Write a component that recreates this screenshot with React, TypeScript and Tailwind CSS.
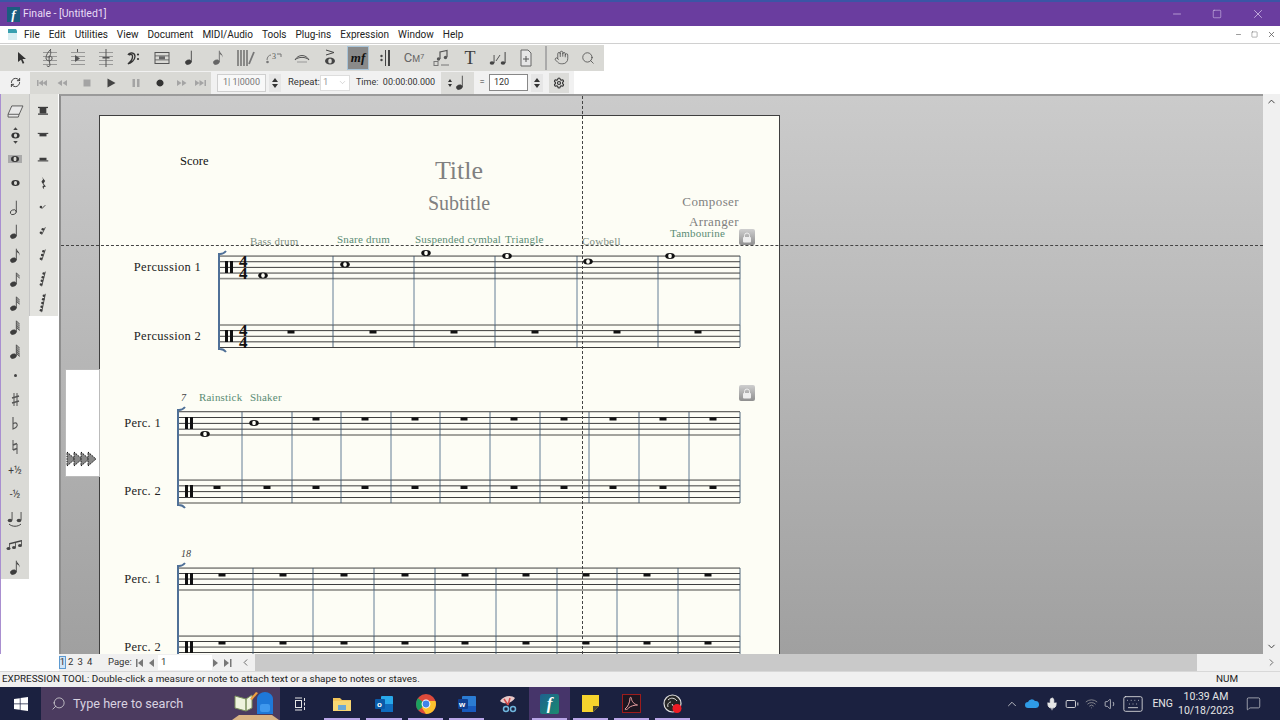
import { ChevronLeft, ChevronRight, ChevronUp, ChevronDown, Hand, Search, Settings, RefreshCw, Minus, Square, X, Mic, Volume1, Wifi, Keyboard, MessageSquare, Battery } from "lucide-react";
import type { ReactNode } from "react";

const ui = "font-['Roboto','Noto_Sans',sans-serif]";
const ink = "#3d3d3d";

// ---- small music glyphs used by the palettes
function Note({ flags = 0, open = false, fill = ink }: { flags?: number; open?: boolean; fill?: string }) {
  return (
    <svg width="12" height="17" viewBox="0 0 14 20">
      <ellipse cx="5" cy="15.5" rx="3.6" ry="2.7" transform="rotate(-22 5 15.5)" fill={open ? "none" : fill} stroke={fill} strokeWidth={open ? 1 : 0.5} />
      <rect x="8" y="2" width="1" height="13.5" fill={fill} />
      {flags === 1 && <path d="M9 2c.5 3 4 4 3.4 8-.5-2.5-2-3.500-3.400-4z" fill={fill} />}
      {flags > 1 &&
        Array.from({ length: flags }).map((_, i) => <path key={i} d={`M9 ${2 + i * 2.4}l3.500 3.500v1.300l-3.500-3.500z`} fill={fill} />)}
    </svg>
  );
}

function Rest({ kind }: { kind: number }) {
  if (kind === 0)
    return (
      <svg width="14" height="10" viewBox="0 0 16 12">
        <rect x="2" y="1" width="12" height="1.500" fill={ink} />
        <rect x="4" y="2" width="8" height="7" fill={ink} />
        <rect x="2" y="9" width="12" height="1.500" fill={ink} />
      </svg>
    );
  if (kind === 1)
    return (
      <svg width="14" height="9" viewBox="0 0 16 10">
        <rect x="2" y="2" width="12" height="1.200" fill={ink} />
        <rect x="4" y="3" width="8" height="3" fill={ink} />
      </svg>
    );
  if (kind === 2)
    return (
      <svg width="14" height="9" viewBox="0 0 16 10">
        <rect x="4" y="3" width="8" height="3" fill={ink} />
        <rect x="2" y="6" width="12" height="1.200" fill={ink} />
      </svg>
    );
  if (kind === 3)
    return (
      <svg width="9" height="15" viewBox="0 0 10 18">
        <path d="M3 1l4 5-2 3 3 4c-2-.5-3.500 0-2 3-2.500-1.500-3-4-.500-4.500L2.500 7 4.500 4z" fill={ink} />
      </svg>
    );
  const dots = kind - 3;
  return (
    <svg width="11" height="22" viewBox="0 0 12 22">
      <path d={`M4 ${11 + dots * 2}L8 ${11 - dots * 2}`} stroke={ink} strokeWidth="1" />
      {Array.from({ length: dots }).map((_, i) => (
        <circle key={i} cx={3.2 + (i * 4) / Math.max(dots, 1)} cy={11 + dots * 2 - 2 - i * 4} r="1.400" fill={ink} />
      ))}
    </svg>
  );
}

function Txt({ children, className }: { children: ReactNode; className: string }) {
  return <span className={`leading-none text-[#3d3d3d] ${className}`}>{children}</span>;
}

function StaffIcon({ mark }: { mark?: ReactNode }) {
  return (
    <svg width="20" height="20" viewBox="0 0 20 20">
      {[4, 8, 12, 16].map((y) => (
        <rect key={y} x="3" y={y} width="14" height="0.800" fill="#888" />
      ))}
      {mark}
    </svg>
  );
}

const topTools: ReactNode[] = [
  <svg key="a" width="12" height="14" viewBox="0 0 12 14"><path d="M2 1l8 7H6.500l1.800 4-1.600.8L5 8.800 2 11z" fill="#333" /></svg>,
  <StaffIcon key="b" mark={<path d="M11 1c-3 3-5 6-5 9 0 3 5 4 6 1s-4-4-4-1M10 2c2 3-.5 6-1 9l1 6c0 2-3 2-3 .5" fill="none" stroke="#555" strokeWidth="1" />} />,
  <StaffIcon key="c" mark={<><path d="M7 7v7l5-3.500z" fill="#555" /><rect x="9" y="1" width="1" height="3" fill="#555" /></>} />,
  <StaffIcon key="d" mark={<><rect x="9.500" y="1" width="1" height="18" fill="#555" /><rect x="6.500" y="9" width="7" height="1.500" fill="#555" /></>} />,
  <svg key="e" width="16" height="16" viewBox="0 0 16 16"><path d="M2 5c1-3 7-3 7 1.500C9 10 5 13 2 14c2-2 5-4 4.500-8C6 3.500 3.500 4 3.500 5.500" fill="none" stroke="#333" strokeWidth="1.300" /><circle cx="12" cy="4.500" r="1.100" fill="#333" /><circle cx="12" cy="9" r="1.100" fill="#333" /></svg>,
  <svg key="f" width="16" height="14" viewBox="0 0 16 14"><rect x="1" y="1.500" width="14" height="11" fill="none" stroke="#555" /><rect x="1" y="4.500" width="14" height="0.800" fill="#555" /><rect x="1" y="8.500" width="14" height="0.800" fill="#555" /><rect x="5" y="5.300" width="6" height="3" fill="#666" /></svg>,
  <Note key="g" />,
  <Note key="h" flags={1} fill="#666" />,
  <svg key="i" width="20" height="18" viewBox="0 0 20 18"><path d="M2 1v16M5 1v16M8 1v16M11 1v16" stroke="#555" strokeWidth="1.200" /><path d="M13 15l5-12" stroke="#777" strokeWidth="1.800" /></svg>,
  <svg key="j" width="18" height="14" viewBox="0 0 18 14"><path d="M2 9c0-3 2-5 4-5" fill="none" stroke="#777" /><circle cx="2.500" cy="11" r="1.300" fill="#777" /><text x="7" y="8" fontSize="8" fontFamily="Liberation Serif" fill="#555">3</text><path d="M12 3h4v3" fill="none" stroke="#777" /></svg>,
  <svg key="k" width="18" height="12" viewBox="0 0 18 12"><path d="M2 8C5 2 13 2 16 8M2 8C5 4.500 13 4.500 16 8" fill="none" stroke="#555" /><path d="M4 10h10" stroke="#999" /></svg>,
  <svg key="l" width="14" height="18" viewBox="0 0 14 18"><path d="M3 1l8 2.500L3 6" fill="none" stroke="#444" /><ellipse cx="7" cy="12" rx="5" ry="3.500" fill="#444" /><ellipse cx="7" cy="12" rx="1.800" ry="2.600" fill="#d6d6d2" /></svg>,
  <Txt key="m" className="font-['Liberation_Serif',serif] font-bold italic text-[13px] !text-[#111]">mf</Txt>,
  <svg key="n" width="14" height="18" viewBox="0 0 14 18"><circle cx="2.500" cy="7" r="1.200" fill="#444" /><circle cx="2.500" cy="11" r="1.200" fill="#444" /><rect x="6" y="1" width="1" height="16" fill="#444" /><rect x="9" y="1" width="2" height="16" fill="#444" /></svg>,
  <Txt key="o" className="text-[13px] !text-[#666]">C<span className="text-[9px]">M</span><sup className="text-[7px]">7</sup></Txt>,
  <svg key="p" width="18" height="18" viewBox="0 0 18 18"><path d="M7 10V3l7-1.500V8" fill="none" stroke="#555" strokeWidth="1.200" /><circle cx="5.500" cy="10" r="1.700" fill="#555" /><circle cx="12.500" cy="8.500" r="1.700" fill="#555" /><rect x="1" y="12.500" width="4" height="4" fill="none" stroke="#777" /><path d="M8 16h8" stroke="#777" /></svg>,
  <Txt key="q" className="font-['Liberation_Serif',serif] text-[18px]">T</Txt>,
  <svg key="r" width="20" height="16" viewBox="0 0 20 16"><ellipse cx="4" cy="13" rx="2.300" ry="1.800" fill="#444" /><rect x="5.600" y="5" width="0.900" height="8" fill="#444" /><path d="M8 11l4-6" stroke="#555" /><ellipse cx="15" cy="13" rx="2.300" ry="1.800" fill="#444" /><rect x="16.600" y="2" width="1" height="11" fill="#444" /></svg>,
  <svg key="s" width="14" height="18" viewBox="0 0 14 18"><path d="M2 1h7l3 3v13H2z" fill="#e6e6e6" stroke="#666" /><path d="M7 7v6M4 10h6" stroke="#555" /></svg>,
];

const leftTools: ReactNode[] = [
  <svg key="0" width="17" height="13" viewBox="0 0 18 14"><path d="M5 1h12l-4 9H1zM1 10l0 3h11l1-3" fill="#e8e8e8" stroke="#555" /></svg>,
  <svg key="1" width="11" height="17" viewBox="0 0 12 18"><path d="M6 0l2.500 3h-5zM6 18l2.500-3h-5z" fill="#444" /><ellipse cx="6" cy="9" rx="4.500" ry="3.200" fill="#333" /><ellipse cx="6" cy="9" rx="1.700" ry="2.300" fill="#d8d8d4" /></svg>,
  <svg key="2" width="14" height="10" viewBox="0 0 14 10"><rect x="0" y="1" width="14" height="8" fill="#aaa" /><ellipse cx="7" cy="5" rx="4" ry="3" fill="#333" /><ellipse cx="7" cy="5" rx="1.500" ry="2.200" fill="#d8d8d4" /></svg>,
  <svg key="3" width="11" height="8" viewBox="0 0 12 8"><ellipse cx="6" cy="4" rx="4.500" ry="3.200" fill="#333" /><ellipse cx="6" cy="4" rx="1.700" ry="2.300" fill="#d8d8d4" /></svg>,
  <Note key="4" open />,
  <Note key="5" />,
  <Note key="6" flags={1} />,
  <Note key="7" flags={2} />,
  <Note key="8" flags={3} />,
  <Note key="9" flags={4} />,
  <Note key="10" flags={5} />,
  <span key="11" className="h-[3px] w-[3px] rounded-full bg-[#444]" />,
  <svg key="12" width="9" height="15" viewBox="0 0 9 15" fill="none" stroke="#555"><path d="M3 1v13M6 1v13" /><path d="M1 6l7-2M1 11l7-2" strokeWidth="1.600" /></svg>,
  <svg key="13" width="8" height="15" viewBox="0 0 8 15" fill="none" stroke="#555"><path d="M2 1v12c3-1 5-3 4-5s-3-1-4 0" strokeWidth="1.100" /></svg>,
  <svg key="14" width="8" height="16" viewBox="0 0 8 16" fill="none" stroke="#555"><path d="M2 1v10M6 5v10" /><path d="M2 6l4-1.500M2 11l4-1.500" strokeWidth="1.600" /></svg>,
  <Txt key="15" className="text-[10px]">+½</Txt>,
  <Txt key="16" className="text-[10px]">-½</Txt>,
  <svg key="17" width="18" height="16" viewBox="0 0 18 16"><ellipse cx="4" cy="9.500" rx="2.300" ry="1.800" fill="#444" /><rect x="5.600" y="1" width="0.900" height="8" fill="#444" /><ellipse cx="13" cy="9.500" rx="2.300" ry="1.800" fill="#444" /><rect x="14.600" y="1" width="0.900" height="8" fill="#444" /><path d="M3 13c3 3 9 3 12 0" fill="none" stroke="#444" /></svg>,
  <svg key="18" width="18" height="16" viewBox="0 0 18 16"><path d="M3.500 8l12-3v1.500l-12 3z" fill="#444" /><rect x="3.200" y="8" width="0.800" height="5" fill="#444" /><rect x="9" y="7" width="0.800" height="5" fill="#444" /><rect x="15" y="5" width="0.800" height="5" fill="#444" /><ellipse cx="2.500" cy="13.500" rx="2" ry="1.500" fill="#444" /><ellipse cx="8" cy="12.500" rx="2" ry="1.500" fill="#444" /><ellipse cx="14" cy="10.500" rx="2" ry="1.500" fill="#444" /></svg>,
  <Note key="19" flags={1} />,
];

function Glyph({ d, fill = "#9c9c9c", size = 12 }: { d: string; fill?: string; size?: number }) {
  return (
    <svg width={size} height={size} viewBox="0 0 12 12">
      <path d={d} fill={fill} />
    </svg>
  );
}

const transport: { d: string; fill: string; w: string }[] = [
  { d: "M2 3h1.500v6H2zM8 3v6L3.500 6zM12 3v6L7.500 6z", fill: "#a4a4a4", w: "w-[19px]" },
  { d: "M6 3v6L1.500 6zM11 3v6L6.500 6z", fill: "#a4a4a4", w: "w-[24px]" },
  { d: "M2.500 2.500h7v7h-7z", fill: "#a4a4a4", w: "w-[25px]" },
  { d: "M2.500 1.500l8 4.500-8 4.500z", fill: "#444", w: "w-[25px]" },
  { d: "M2.500 2h2.500v8H2.500zM7 2h2.500v8H7z", fill: "#a4a4a4", w: "w-[25px]" },
  { d: "M6 2.500a3.500 3.500 0 1 0 .001 0z", fill: "#333", w: "w-[24px]" },
  { d: "M1 3l4.500 3L1 9zM6 3l4.500 3L6 9z", fill: "#a4a4a4", w: "w-[20px]" },
  { d: "M0 3l4.500 3L0 9zM4.500 3L9 6 4.500 9zM9.500 3H11v6H9.500z", fill: "#a4a4a4", w: "w-[20px]" },
];

function Spinner() {
  return (
    <div className="flex h-[18px] w-[12px] flex-col items-center justify-center gap-[2px] bg-[#e6e6e6]">
      <span className="h-0 w-0 border-x-[3px] border-b-[4px] border-x-transparent border-b-[#333]" />
      <span className="h-0 w-0 border-x-[3px] border-t-[4px] border-x-transparent border-t-[#333]" />
    </div>
  );
}

// ---- score
const serif = "Liberation Serif, serif";

function Staff({ x1, ys, thick }: { x1: number; ys: number[]; thick: number }) {
  return (
    <g>
      {ys.map((y, i) => (
        <rect key={y} x={x1} y={y - (i === thick ? 0.8 : 0.4)} width={740 - x1} height={i === thick ? 1.6 : 0.9} fill={i === thick ? "#8d8d88" : "#2a2a2a"} />
      ))}
    </g>
  );
}

function Whole({ x, y }: { x: number; y: number }) {
  return (
    <g>
      <ellipse cx={x} cy={y} rx="4.800" ry="3" fill="#111" />
      <ellipse cx={x} cy={y} rx="1.800" ry="2.200" fill="#fdfdf5" />
    </g>
  );
}

function RestMark({ x, y }: { x: number; y: number }) {
  return <rect x={x - 3.500} y={y} width="7" height="3" fill="#111" />;
}

function PercClef({ x, y }: { x: number; y: number }) {
  return (
    <g fill="#111">
      <rect x={x} y={y} width="3" height="12" />
      <rect x={x + 5} y={y} width="3" height="12" />
    </g>
  );
}

function Bracket({ x, y1, y2 }: { x: number; y1: number; y2: number }) {
  return (
    <path d={`M${x + 8} ${y1 - 4}c-2 2.500-4 3-6 3h-1v${y2 - y1 + 2}h1c2 0 4 .5 6 3`} fill="none" stroke="#4f7097" strokeWidth="2" />
  );
}

function Bars({ xs, y1, y2, y3, y4 }: { xs: number[]; y1: number; y2: number; y3: number; y4: number }) {
  return (
    <g stroke="#3f5870" strokeWidth="0.900">
      {xs.map((x) => (
        <g key={x}>
          <path d={`M${x} ${y1}V${y2}`} />
          <path d={`M${x} ${y2}V${y3}`} stroke="#54708c" />
          <path d={`M${x} ${y3}V${y4}`} />
        </g>
      ))}
    </g>
  );
}

function Expr({ x, y, children, gray }: { x: number; y: number; children: string; gray?: boolean }) {
  return (
    <text x={x} y={y} fontFamily={serif} fontSize="11" fill={gray ? "#7f8f84" : "#5a8c74"} letterSpacing="0.200">
      {children}
    </text>
  );
}

function TimeSig({ y }: { y: number }) {
  return (
    <text y={y} fontFamily={serif} fontWeight="700" fontSize="17" fill="#111">
      <tspan x="239">4</tspan>
      <tspan x="239" dy="12">4</tspan>
    </text>
  );
}

function Score() {
  const lines1 = [256, 261.7, 267.3, 273, 278.6];
  const lines2 = [325, 330.6, 336.2, 341.8, 347.4];
  const s2a = [411.7, 417.5, 423.3, 429.1, 435];
  const s2b = [480, 485.8, 491.6, 497.4, 503];
  const s3a = [568, 573.5, 579, 584.5, 590];
  const s3b = [636, 641.5, 647, 652.5, 658];
  const b2 = [242, 292, 341, 391, 440, 490, 540, 589, 639, 689, 740];
  const b3 = [253, 313, 374, 435, 496, 557, 617, 678, 740];
  return (
    <svg width="680" height="540" viewBox="100 116 680 540" className="block">
      <text x="180" y="165" fontFamily={serif} fontSize="12.500" fill="#111">Score</text>
      <text x="459" y="179" textAnchor="middle" fontFamily={serif} fontSize="26" fill="#808080">Title</text>
      <text x="459" y="210" textAnchor="middle" fontFamily={serif} fontSize="20" fill="#808080">Subtitle</text>
      <text x="739" y="206" textAnchor="end" fontFamily={serif} fontSize="13" letterSpacing="0.400" fill="#808080">Composer</text>
      <text x="739" y="226" textAnchor="end" fontFamily={serif} fontSize="13" letterSpacing="0.400" fill="#808080">Arranger</text>

      <Expr x={250} y={245} gray>Bass drum</Expr>
      <Expr x={337} y={243}>Snare drum</Expr>
      <Expr x={415} y={243}>Suspended cymbal</Expr>
      <Expr x={505} y={243}>Triangle</Expr>
      <Expr x={582} y={245} gray>Cowbell</Expr>
      <Expr x={670} y={237}>Tambourine</Expr>

      <text x="201" y="271" textAnchor="end" fontFamily={serif} fontSize="12.500" letterSpacing="0.300" fill="#222">Percussion 1</text>
      <text x="201" y="340" textAnchor="end" fontFamily={serif} fontSize="12.500" letterSpacing="0.300" fill="#222">Percussion 2</text>
      <Staff x1={219} ys={lines1} thick={4} />
      <Staff x1={219} ys={lines2} thick={0} />
      <Bars xs={[333, 414, 495, 577, 658, 740]} y1={256} y2={279} y3={325} y4={347} />
      <Bracket x={218} y1={255} y2={348} />
      <PercClef x={225} y={261} />
      <PercClef x={225} y={330} />
      <TimeSig y={267} />
      <TimeSig y={336} />
      <Whole x={263} y={275.500} />
      <Whole x={345} y={264.500} />
      <Whole x={426} y={253} />
      <Whole x={507} y={256} />
      <Whole x={588} y={261.500} />
      <Whole x={670} y={256} />
      {[291, 373, 454, 535, 617, 698].map((x) => (
        <RestMark key={x} x={x} y={330.500} />
      ))}

      <text x="181" y="401" fontFamily={serif} fontStyle="italic" fontSize="10" fill="#444">7</text>
      <Expr x={199} y={401}>Rainstick</Expr>
      <Expr x={250} y={401}>Shaker</Expr>
      <text x="161" y="427" textAnchor="end" fontFamily={serif} fontSize="12.500" letterSpacing="0.300" fill="#222">Perc. 1</text>
      <text x="161" y="495" textAnchor="end" fontFamily={serif} fontSize="12.500" letterSpacing="0.300" fill="#222">Perc. 2</text>
      <Staff x1={179} ys={s2a} thick={4} />
      <Staff x1={179} ys={s2b} thick={4} />
      <Bars xs={b2} y1={412} y2={435} y3={480} y4={503} />
      <Bracket x={177} y1={411} y2={504} />
      <PercClef x={185} y={417} />
      <PercClef x={185} y={485} />
      <Whole x={205} y={434} />
      <Whole x={254} y={423} />
      {[316, 365, 415, 464, 514, 564, 613, 663, 713].map((x) => (
        <RestMark key={x} x={x} y={417.500} />
      ))}
      {[217, 267, 316, 365, 415, 464, 514, 564, 613, 663, 713].map((x) => (
        <RestMark key={x} x={x} y={486} />
      ))}

      <text x="181" y="557" fontFamily={serif} fontStyle="italic" fontSize="10" fill="#444">18</text>
      <text x="161" y="583" textAnchor="end" fontFamily={serif} fontSize="12.500" letterSpacing="0.300" fill="#222">Perc. 1</text>
      <text x="161" y="651" textAnchor="end" fontFamily={serif} fontSize="12.500" letterSpacing="0.300" fill="#222">Perc. 2</text>
      <Staff x1={179} ys={s3a} thick={4} />
      <Staff x1={179} ys={s3b} thick={4} />
      <Bars xs={b3} y1={568} y2={590} y3={636} y4={658} />
      <Bracket x={177} y1={567} y2={660} />
      <PercClef x={185} y={573} />
      <PercClef x={185} y={641} />
      {[222, 283, 344, 405, 465, 526, 586, 647, 708].map((x) => (
        <g key={x}>
          <RestMark x={x} y={573.500} />
          <RestMark x={x} y={641.500} />
        </g>
      ))}
    </svg>
  );
}

function Lock({ className }: { className: string }) {
  return (
    <div className={`absolute flex h-[16px] w-[16px] items-center justify-center rounded-[2px] bg-gradient-to-b from-[#cfcfcf] to-[#8f8f8f] ${className}`}>
      <svg width="10" height="11" viewBox="0 0 10 11">
        <path d="M2.500 5V3.500a2.500 2.500 0 0 1 5 0V5" fill="none" stroke="#eee" />
        <rect x="1" y="5" width="8" height="5.500" rx="1" fill="#eee" />
      </svg>
    </div>
  );
}

// ---- taskbar icons
const taskIcons: { node: ReactNode; w: string; active?: boolean; line?: boolean }[] = [
  { w: "w-[42px]", line: true, node: <svg width="20" height="18" viewBox="0 0 20 18"><path d="M1 3h7l2 2h9v11H1z" fill="#f3c55a" /><rect x="1" y="6" width="18" height="10" fill="#f7d774" /><rect x="6" y="10" width="8" height="5" fill="#6ba8d6" /></svg> },
  { w: "w-[42px]", line: true, node: <svg width="20" height="18" viewBox="0 0 20 18"><rect x="7" y="1" width="12" height="16" rx="1" fill="#28a8ea" /><rect x="7" y="9" width="12" height="8" fill="#0f6cbd" /><rect x="1" y="4" width="10" height="10" rx="1" fill="#0a5aa8" /><text x="3" y="12" fontSize="8" fontWeight="700" fontFamily="Liberation Sans" fill="#fff">o</text></svg> },
  { w: "w-[41px]", line: true, node: <svg width="20" height="20" viewBox="0 0 20 20"><circle cx="10" cy="10" r="10" fill="#de4a3b" /><path d="M10 10L1.300 15A10 10 0 0 1 3 3L10 10z" fill="#1aa15f" transform="rotate(-10 10 10)" /><path d="M10 20a10 10 0 0 0 9.500-13H10l-4 7z" fill="#fbc02d" /><circle cx="10" cy="10" r="4.400" fill="#fff" /><circle cx="10" cy="10" r="3.400" fill="#3f83e8" /></svg> },
  { w: "w-[41px]", line: true, node: <svg width="20" height="18" viewBox="0 0 20 18"><rect x="5" y="1" width="14" height="16" rx="1" fill="#2b7cd3" /><rect x="5" y="11" width="14" height="6" fill="#185abd" /><rect x="1" y="4" width="10" height="10" rx="1" fill="#103f91" /><text x="2" y="12" fontSize="8" fontWeight="700" fontFamily="Liberation Sans" fill="#fff">w</text></svg> },
  { w: "w-[42px]", node: <svg width="20" height="20" viewBox="0 0 20 20"><path d="M2 7C6 1 14 1 17 4c-2 4-10 8-15 3z" fill="#e8c8c8" /><path d="M6 5l4 6M12 4l-2 7" stroke="#d04a4a" strokeWidth="1.500" /><circle cx="8" cy="15" r="2.500" fill="none" stroke="#6fb5dc" strokeWidth="1.500" /><circle cx="15" cy="15" r="2.500" fill="none" stroke="#6fb5dc" strokeWidth="1.500" /></svg> },
  { w: "w-[41px]", active: true, line: true, node: <div className="flex h-[20px] w-[19px] items-center justify-center rounded-[2px] bg-gradient-to-br from-[#1f5f8f] to-[#1d8a6d] font-['Liberation_Serif',serif] text-[17px] font-bold italic leading-none text-white">f</div> },
  { w: "w-[41px]", line: true, node: <svg width="19" height="19" viewBox="0 0 19 19"><path d="M1 1h17v11l-6 6H1z" fill="#f6d32d" /><path d="M12 18v-6h6z" fill="#4a4632" /></svg> },
  { w: "w-[41px]", line: true, node: <svg width="19" height="19" viewBox="0 0 19 19"><rect x="0.500" y="0.500" width="18" height="18" fill="#1d1620" stroke="#9c1c1c" /><path d="M3 15c3-2 5-7 5-11 0-1 1.500-1 1.500.5 0 3 3 6 6 6.500-3 0-7 1-9 3-1.500 2-3.500 2-3.500 1z" fill="none" stroke="#e8a0a0" strokeWidth="1" /></svg> },
  { w: "w-[41px]", line: true, node: <svg width="20" height="20" viewBox="0 0 20 20"><circle cx="9.500" cy="9.500" r="8.500" fill="#262626" stroke="#ddd" strokeWidth="1.200" /><path d="M5 6c3-3 7-2 9 1M5 13c-1-3 1-5 3-5M9 10l3 5" fill="none" stroke="#ddd" /><circle cx="14" cy="14.500" r="4.500" fill="#ef1c24" /></svg> },
];

export default function App() {
  return (
    <div className={`flex h-[720px] w-[1280px] flex-col overflow-hidden bg-white ${ui}`}>
      {/* title bar */}
      <div className="flex h-[26px] shrink-0 items-center border-t-[2px] border-t-[#3b55a5] bg-[#6a3d9f] pl-[7px] text-white">
        <div className="flex h-[15px] w-[13px] items-center justify-center bg-[#1b5d80] font-['Liberation_Serif',serif] text-[13px] font-bold italic leading-none">f</div>
        <span className="ml-[3px] text-[10.5px] text-[#e8dcf5]">Finale - [Untitled1]</span>
        <div className="ml-auto flex items-center text-[#e4d6f4]">
          <Minus size={12} strokeWidth={1.2} className="mr-[29px]" />
          <Square size={10} strokeWidth={1.2} className="mr-[29px]" />
          <X size={14} strokeWidth={1.2} className="mr-[15px]" />
        </div>
      </div>

      {/* menu bar */}
      <div className="flex h-[18px] shrink-0 items-center border-b border-b-[#d0d0d0] pl-[7px] text-[10px] text-[#222]">
        <svg width="11" height="13" viewBox="0 0 11 13" className="mr-[6px]"><path d="M1 1h8l1 2v9H1z" fill="#d8eef2" /><path d="M1 1h8l1 2v2H1z" fill="#3aa0b0" /></svg>
        <div className="flex gap-[9px]">
          {["File", "Edit", "Utilities", "View", "Document", "MIDI/Audio", "Tools", "Plug-ins", "Expression", "Window", "Help"].map((m) => (
            <span key={m}>{m}</span>
          ))}
        </div>
        <div className="ml-auto flex items-center gap-[9px] pr-[4px] text-[#555]">
          <Minus size={7} strokeWidth={2} />
          <Square size={7} strokeWidth={1.500} />
          <X size={9} strokeWidth={2} />
        </div>
      </div>

      {/* main tools */}
      <div className="flex h-[27px] shrink-0 items-center">
        <div className="flex h-[26px] w-[604px] items-center bg-[#d9d9d5] pl-[8px]">
          {topTools.map((icon, i) => (
            <div key={i} className={`flex h-[24px] w-[28px] shrink-0 items-center justify-center ${i === 12 ? "border border-[#a9c4d8] bg-[#8a8a8a] !w-[22px] mx-[3px]" : ""}`}>
              {icon}
            </div>
          ))}
          <div className="ml-[5px] h-[24px] border-x border-x-[#aaa] w-[2px]" />
          <Hand size={15} strokeWidth={1.200} className="ml-[7px] text-[#444]" />
          <Search size={14} strokeWidth={1.300} className="ml-[12px] text-[#444]" />
        </div>
      </div>

      {/* playback controls */}
      <div className="flex h-[23px] w-[574px] shrink-0 items-center bg-[#f1f1f1] text-[9.500px] text-[#333]">
        <div className="flex w-[30px] justify-center">
          <RefreshCw size={11} strokeWidth={2} className="text-[#333]" />
        </div>
        <div className="flex h-[22px] w-[181px] items-center bg-[#d9d9d5] pl-[2px]">
          {transport.map((t, i) => (
            <div key={i} className={`flex justify-center ${t.w}`}>
              <Glyph d={t.d} fill={t.fill} />
            </div>
          ))}
        </div>
        <div className="ml-[6px] flex h-[18px] w-[49px] items-center justify-center border border-[#cfcfcf] bg-[#f8f8f8] text-[9px] text-[#777]">1| 1|0000</div>
        <div className="ml-[3px]"><Spinner /></div>
        <span className="ml-[7px] w-[30px]">Repeat:</span>
        <div className="ml-[2px] flex h-[16px] w-[30px] items-center justify-between border border-[#ddd] bg-white px-[2px] text-[#999]">
          1<ChevronDown size={9} strokeWidth={1} />
        </div>
        <span className="ml-[6px] w-[79px] whitespace-pre text-[9px]">Time:  00:00:00.000</span>
        <div className="ml-[6px] flex h-[22px] w-[33px] items-center justify-center gap-[3px] bg-[#dcdcd9]">
          <div className="flex flex-col gap-[2px]">
            <span className="h-0 w-0 border-x-[2.500px] border-b-[3px] border-x-transparent border-b-[#333]" />
            <span className="h-0 w-0 border-x-[2.500px] border-t-[3px] border-x-transparent border-t-[#333]" />
          </div>
          <Note />
        </div>
        <span className="ml-[1px] w-[14px] text-center">=</span>
        <div className="flex h-[17px] w-[39px] items-center border border-[#888] bg-white pl-[4px] text-[9px]">120</div>
        <div className="ml-[3px]"><Spinner /></div>
        <div className="ml-[6px] flex h-[20px] w-[20px] items-center justify-center bg-[#dcdcd9]">
          <Settings size={12} strokeWidth={2.400} className="text-[#333]" />
        </div>
      </div>

      {/* work area */}
      <div className="flex min-h-0 flex-1">
        <div className="flex w-[59px] shrink-0 items-start border-l border-l-[#a98fd0]">
          <div className="flex w-[28px] flex-col bg-[#dadad6] pt-[5px]">
            {leftTools.map((icon, i) => (
              <div key={i} className="flex h-[24px] items-center justify-center">{icon}</div>
            ))}
          </div>
          <div className="flex w-[29px] flex-col border-l border-l-[#c6c6c6] bg-[#e3e3df] pt-[5px] pb-[1px] pr-[2px]">
            {[0, 1, 2, 3, 4, 5, 6, 7, 8].map((k) => (
              <div key={k} className="flex h-[24px] items-center justify-center">
                <Rest kind={k} />
              </div>
            ))}
          </div>
        </div>

        <div className="relative min-w-0 flex-1 overflow-hidden border-l-[2px] border-t-[2px] border-l-[#8f8f8f] border-t-[#9a9a9a] bg-gradient-to-b from-[#cbcbcb] to-[#a0a0a0] pl-[38px] pt-[19px]">
          <div className="h-[640px] w-[681px] border border-[#3f3f3f] bg-[#fdfdf5]">
            <Score />
          </div>
          <Lock className="left-[678px] top-[133px]" />
          <Lock className="left-[678px] top-[289px]" />
          {/* floating palette peeking out from behind the page */}
          <div className="absolute left-[4px] top-[273px] flex h-[108px] w-[35px] items-end border border-[#bbb] bg-white pb-[9px]">
            <svg width="32" height="16" viewBox="0 0 32 16">
              {[1, 8, 15, 22].map((x) => (
                <path key={x} d={`M${x} 1l8 7-8 7z`} fill="#888" stroke="#111" strokeWidth="1" strokeDasharray="1.500 1" />
              ))}
            </svg>
          </div>
          <div className="absolute inset-x-0 top-[149px] border-t border-dashed border-t-[#444]" />
          <div className="absolute inset-y-0 left-[521px] border-l border-dashed border-l-[#444]" />
        </div>

        <div className="flex w-[17px] shrink-0 flex-col items-center justify-between bg-[#f0f0f0] py-[2px] text-[#333]">
          <ChevronUp size={11} strokeWidth={2} />
          <ChevronDown size={11} strokeWidth={2} />
        </div>
      </div>

      {/* page nav + horizontal scroll */}
      <div className="flex h-[17px] shrink-0 items-center text-[9.500px] text-[#333]">
        <div className="h-full w-[59px] shrink-0" />
        <div className="flex h-full flex-1 items-center bg-[#f0f0f0]">
          <span className="flex h-[13px] w-[7px] items-center justify-center border border-[#5d9ad1] bg-[#cfe3f5]">1</span>
          {["2", "3", "4"].map((p) => (
            <span key={p} className="flex h-[13px] w-[9.500px] items-center justify-center">{p}</span>
          ))}
          <span className="ml-[13.500px] w-[24px]">Page:</span>
          <svg width="24" height="12" viewBox="0 0 24 12" fill="#777">
            <path d="M4 2h1.500v8H4zM11 2v8L6 6zM22 2v8l-5-4z" />
          </svg>
          <div className="ml-[2px] flex h-[15px] w-[54px] items-center bg-white pl-[3px]">1</div>
          <svg width="22" height="12" viewBox="0 0 22 12" fill="#777">
            <path d="M1 2v8l5-4zM12 2v8l5-4zM18 2h1.500v8H18z" />
          </svg>
          <ChevronLeft size={11} strokeWidth={1.500} className="ml-[6px]" />
          <div className="ml-[4px] h-[17px] w-[942px] bg-[#c9c9c9]" />
          <ChevronRight size={11} strokeWidth={1.500} className="ml-auto mr-[3px]" />
        </div>
      </div>

      {/* status bar */}
      <div className="flex h-[16px] shrink-0 items-center border-t border-t-[#d8d8d8] bg-[#f0f0f0] pl-[2px] text-[9.900px] text-[#222]">
        <span>EXPRESSION TOOL: Double-click a measure or note to attach text or a shape to notes or staves.</span>
        <span className="ml-auto mr-[40px] w-[24px]">NUM</span>
      </div>

      {/* windows taskbar */}
      <div className="flex h-[33px] shrink-0 items-center bg-[#1b2140] text-white">
        <div className="flex w-[41px] justify-center">
          <svg width="14" height="14" viewBox="0 0 14 14" fill="#fff">
            <path d="M0 2l5.800-.8v5.300H0zM6.500 1.100L14 0v6.500H6.500zM0 7.300h5.800v5.500L0 12zM6.500 7.300H14V14l-7.500-1.100z" />
          </svg>
        </div>
        <div className="flex h-[33px] w-[239px] items-center bg-[#4b3b5f] pl-[10px]">
          <Search size={15} strokeWidth={1.200} className="-scale-x-100 text-[#ddd]" />
          <span className="ml-[7px] text-[12.700px] text-[#d9d2e0]">Type here to search</span>
          <svg width="56" height="33" viewBox="0 0 56 33" className="ml-auto">
            <path d="M8 33l7-5h33l7 5z" fill="#d9b384" />
            <path d="M11 9l11 3v12l-11-3zM22 12l6-4v13l-6 3z" fill="#eef3dd" stroke="#7a8f5d" />
            <path d="M26 12l6-7 2 1-6 7z" fill="#f0a040" />
            <path d="M33 27V12c0-4 4-7 8-7s8 3 8 7v15z" fill="#1e78d8" />
            <rect x="36" y="17" width="10" height="8" rx="2" fill="#3f98ee" />
          </svg>
        </div>
        <div className="flex w-[41px] justify-center">
          <svg width="14" height="14" viewBox="0 0 14 14" fill="none" stroke="#e4e4e4">
            <path d="M1 1h7M1 13h7" />
            <rect x="1.500" y="3.500" width="6" height="7" />
            <path d="M10.500 1v3M10.500 5.500v3M10.500 10v3" />
          </svg>
        </div>
        <div className="flex">
          {taskIcons.map((t, i) => (
            <div key={i} className={`relative flex h-[33px] items-center justify-center ${t.w} ${t.active ? "bg-[#46356a]" : ""}`}>
              {t.node}
              {t.line && <span className="absolute bottom-0 left-[3px] right-[3px] h-[2px] bg-[#b9a6e8]" />}
            </div>
          ))}
        </div>
        <div className="ml-auto flex items-center text-[#e6e6e6]">
          <ChevronUp size={14} strokeWidth={1.300} />
          <svg width="14" height="9" viewBox="0 0 14 9" className="ml-[6px]"><path d="M3 9a3 3 0 0 1 0-6 4 4 0 0 1 7-1 3.500 3.500 0 0 1 1 7z" fill="#2f9be6" /></svg>
          <Mic size={14} strokeWidth={1.500} className="ml-[6px] fill-[#e6e6e6]" />
          <Battery size={14} strokeWidth={1.500} className="ml-[6px]" />
          <Wifi size={13} strokeWidth={1.300} className="ml-[6px] text-[#aaa]" />
          <Volume1 size={14} strokeWidth={1.200} className="ml-[6px]" />
          <Keyboard size={22} strokeWidth={0.900} className="ml-[4px]" />
          <span className="ml-[8px] text-[10.500px]">ENG</span>
          <div className="ml-[8px] flex w-[50px] flex-col items-center text-[10.500px] leading-[14px]">
            <span>10:39 AM</span>
            <span>10/18/2023</span>
          </div>
          <MessageSquare size={15} strokeWidth={1} className="ml-[15px] mr-[19px]" />
        </div>
      </div>
    </div>
  );
}
